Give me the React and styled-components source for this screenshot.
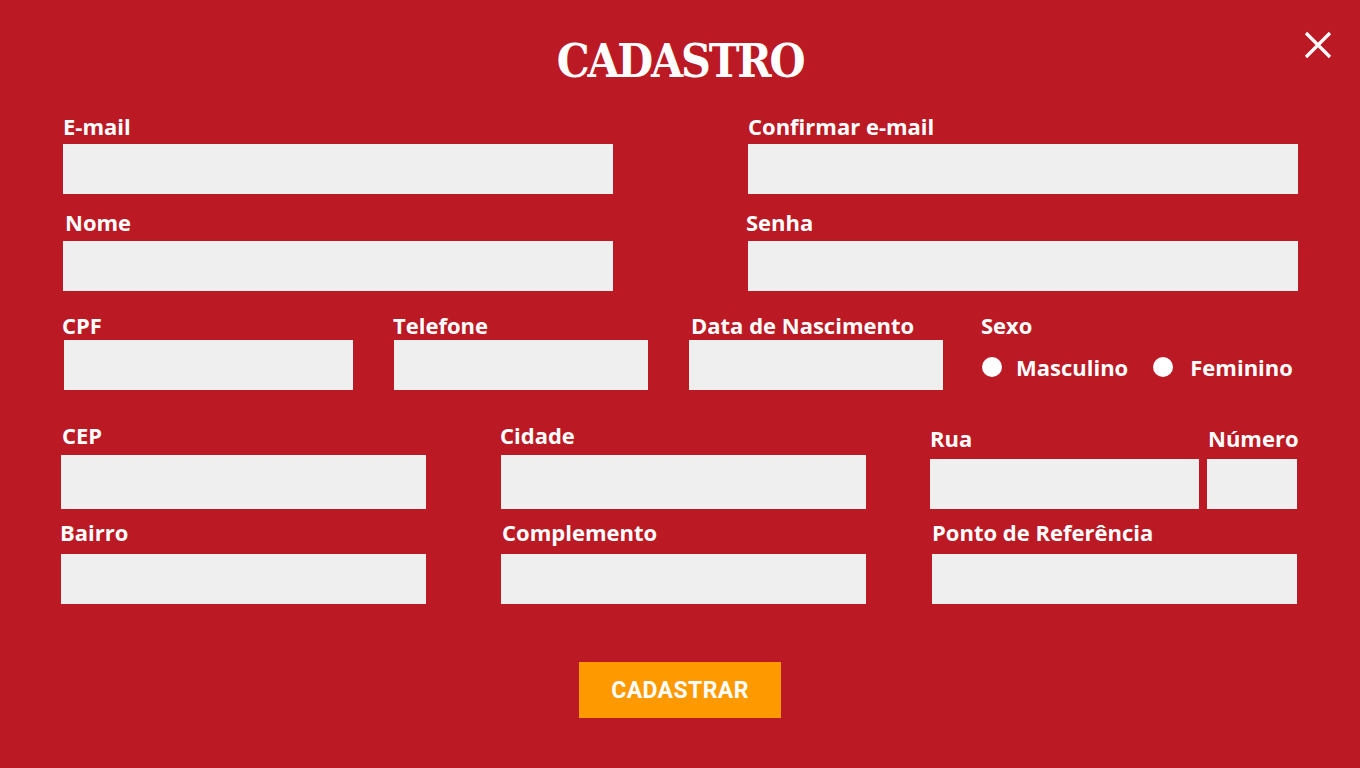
import styled, { createGlobalStyle } from "styled-components"

const GlobalStyle = createGlobalStyle`
  html, body { margin: 0; padding: 0; }
  body { background: #bb1924; }
  * { box-sizing: border-box; }
`

const Page = styled.div`
  position: relative;
  width: 1360px;
  height: 768px;
  background: #bb1924;
  font-family: "Open Sans", Lato, sans-serif;
  color: #fff;
  padding-top: 34px;
  overflow: hidden;
`

const Title = styled.h1`
  margin: 0;
  text-align: center;
  font-family: "DejaVu Serif", "Liberation Serif", serif;
  font-stretch: condensed;
  font-weight: 700;
  font-size: 46px;
  line-height: 54px;
  letter-spacing: -2.2px;
`

const Close = styled.button`
  position: absolute;
  top: 30px;
  right: 27px;
  width: 30px;
  height: 30px;
  padding: 0;
  border: none;
  background: none;
  cursor: pointer;
`

const Row = styled.div`
  display: flex;
  align-items: flex-end;
  margin-top: ${p => p.top}px;
`

const Field = styled.div`
  display: flex;
  flex-direction: column;
  width: ${p => p.w}px;
  margin-left: ${p => p.ml}px;
`

const Label = styled.label`
  font-size: 22px;
  font-weight: 700;
  line-height: 24px;
  margin-left: ${p => p.shift || 0}px;
  margin-bottom: ${p => p.gap}px;
  white-space: nowrap;
`

const Input = styled.input`
  width: 100%;
  height: ${p => p.h || 50}px;
  border: none;
  background: #efefef;
  outline: none;
  padding: 0 10px;
  font-size: 18px;
`

const Sexo = styled.div`
  display: flex;
  flex-direction: column;
  margin-left: ${p => p.ml}px;
  padding-bottom: 11px;
`

const Options = styled.div`
  display: flex;
  align-items: center;
  gap: 24px;
  margin-top: 18px;
`

const Option = styled.label`
  display: flex;
  align-items: center;
  gap: ${p => p.gap}px;
  font-size: 22px;
  font-weight: 700;
  line-height: 24px;
  margin-left: 1px;
  cursor: pointer;
`

const Dot = styled.span`
  width: 20px;
  height: 20px;
  border-radius: 50%;
  background: #fff;
`

const Footer = styled.div`
  display: flex;
  justify-content: center;
  margin-top: 58px;
`

const Button = styled.button`
  width: 202px;
  height: 56px;
  border: none;
  background: #ff9900;
  color: #fff;
  font-family: Roboto, "Liberation Sans", sans-serif;
  font-weight: 700;
  font-size: 23px;
  letter-spacing: 0.4px;
  cursor: pointer;
`

const App = () => {
  return (
    <>
      <GlobalStyle />
      <Page>
        <Close aria-label="Fechar">
          <svg width="30" height="30" viewBox="0 0 30 30">
            <path d="M3 3 L27 27 M27 3 L3 27" stroke="#fff" strokeWidth="3.2" />
          </svg>
        </Close>
        <Title>CADASTRO</Title>

        <Row top={26}>
          <Field w={550} ml={63}>
            <Label gap={6}>E-mail</Label>
            <Input />
          </Field>
          <Field w={550} ml={135}>
            <Label gap={6}>Confirmar e-mail</Label>
            <Input />
          </Field>
        </Row>

        <Row top={16}>
          <Field w={550} ml={63}>
            <Label shift={2} gap={7}>Nome</Label>
            <Input />
          </Field>
          <Field w={550} ml={135}>
            <Label shift={-2} gap={7}>Senha</Label>
            <Input />
          </Field>
        </Row>

        <Row top={22}>
          <Field w={289} ml={64}>
            <Label shift={-2} gap={3}>CPF</Label>
            <Input />
          </Field>
          <Field w={254} ml={41}>
            <Label shift={-1} gap={3}>Telefone</Label>
            <Input />
          </Field>
          <Field w={254} ml={41}>
            <Label shift={2} gap={3}>Data de Nascimento</Label>
            <Input />
          </Field>
          <Sexo ml={38}>
            <Label gap={0}>Sexo</Label>
            <Options>
              <Option gap={14}><Dot />Masculino</Option>
              <Option gap={17}><Dot />Feminino</Option>
            </Options>
          </Sexo>
        </Row>

        <Row top={33}>
          <Field w={365} ml={61}>
            <Label shift={1} gap={8}>CEP</Label>
            <Input h={54} />
          </Field>
          <Field w={365} ml={75}>
            <Label shift={-1} gap={8}>Cidade</Label>
            <Input h={54} />
          </Field>
          <Field w={269} ml={64}>
            <Label gap={9}>Rua</Label>
            <Input />
          </Field>
          <Field w={90} ml={8}>
            <Label shift={1} gap={9}>Número</Label>
            <Input />
          </Field>
        </Row>

        <Row top={11}>
          <Field w={365} ml={61}>
            <Label shift={-1} gap={10}>Bairro</Label>
            <Input />
          </Field>
          <Field w={365} ml={75}>
            <Label shift={1} gap={10}>Complemento</Label>
            <Input />
          </Field>
          <Field w={365} ml={66}>
            <Label gap={10}>Ponto de Referência</Label>
            <Input />
          </Field>
        </Row>

        <Footer>
          <Button>CADASTRAR</Button>
        </Footer>
      </Page>
    </>
  )
}

export default App
